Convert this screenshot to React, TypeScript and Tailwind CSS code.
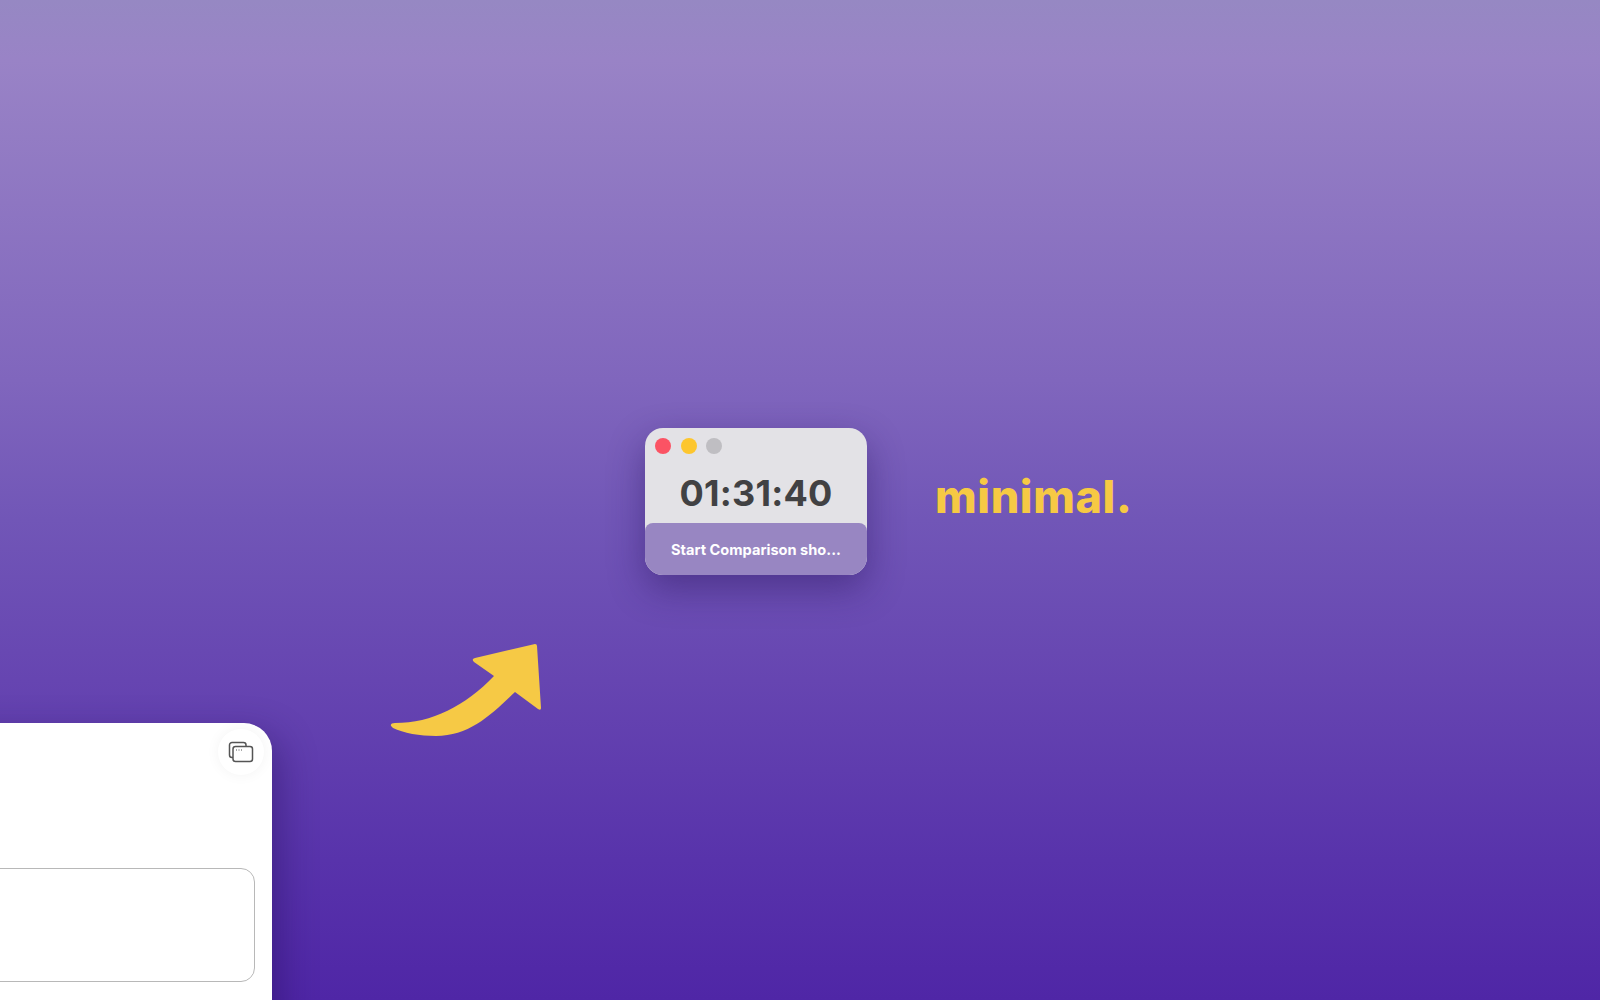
export default function App() {
  return (
    <div className="relative h-screen w-full overflow-hidden bg-[linear-gradient(180deg,#9688c3_0%,#9983c6_6%,#8066bd_38%,#7156b7_52%,#6645b1_68%,#5833ab_86%,#4f26a6_100%)] font-['Inter',sans-serif]">
      {/* timer window */}
      <div className="absolute left-[645px] top-[428px] flex h-[147px] w-[222px] flex-col overflow-hidden rounded-[18px] bg-[#e3e2e6] shadow-[0_14px_36px_rgba(40,20,90,0.45)]">
        <div className="flex gap-[9.5px] pl-[10px] pt-[10px]">
          <span className="h-4 w-4 rounded-full bg-[#fb5364]" />
          <span className="h-4 w-4 rounded-full bg-[#fdc62e]" />
          <span className="h-4 w-4 rounded-full bg-[#bfbec2]" />
        </div>
        <div className="mt-[17px] text-center text-[36px] font-bold leading-[45px] tracking-[0.2px] text-[#414143]">01:31:40</div>
        <div className="mt-auto flex h-[52px] items-center justify-center rounded-t-[8px] bg-[#9886c2] pt-[3px] text-[14.6px] font-bold text-white">
          Start Comparison sho...
        </div>
      </div>

      <div className="absolute left-[935px] top-[467px] text-[45px] font-extrabold leading-[60px] tracking-[0.6px] text-[#f6c944]">minimal.</div>

      {/* arrow */}
      <svg className="absolute left-[380px] top-[635px]" width="170" height="110" viewBox="380 635 170 110">
        <path
          d="M535 644 Q537 644 537 646 L541 708 Q541 711 538 709 L515 692 C492 714 470 736 436 736 C420 736 403 733 393 728 C389 725 391 723 395 723 C432 723 465 706 494 676 L474 662 Q471 659 475 658 Z"
          fill="#f6c945"
        />
      </svg>

      {/* bottom left card */}
      <div className="absolute left-[-200px] top-[723px] h-[400px] w-[472px] rounded-tr-[28px] bg-white shadow-[8px_12px_36px_rgba(30,10,80,0.38)]">
        <div className="absolute right-[8px] top-[6px] flex h-[46px] w-[46px] items-center justify-center rounded-full bg-white shadow-[0_0_14px_rgba(0,0,0,0.05)]">
          <svg width="26" height="22" viewBox="0 0 26 22" fill="none" stroke="#555" strokeWidth="1.5">
            <path d="M5 16.5 H4 A2.5 2.5 0 0 1 1.5 14 V4 A2.5 2.5 0 0 1 4 1.5 H15.5 A2.5 2.5 0 0 1 18 4 V5" />
            <rect x="5" y="5.5" width="19.5" height="15" rx="2.5" />
            <path d="M8 9 H9 M10.5 9 H11.5 M13 9 H14" strokeWidth="1.2" />
          </svg>
        </div>
        <div className="absolute right-[17px] top-[145px] h-[114px] w-[300px] rounded-[14px] border-[1.5px] border-[#b8b8b8]" />
      </div>
    </div>
  );
}
